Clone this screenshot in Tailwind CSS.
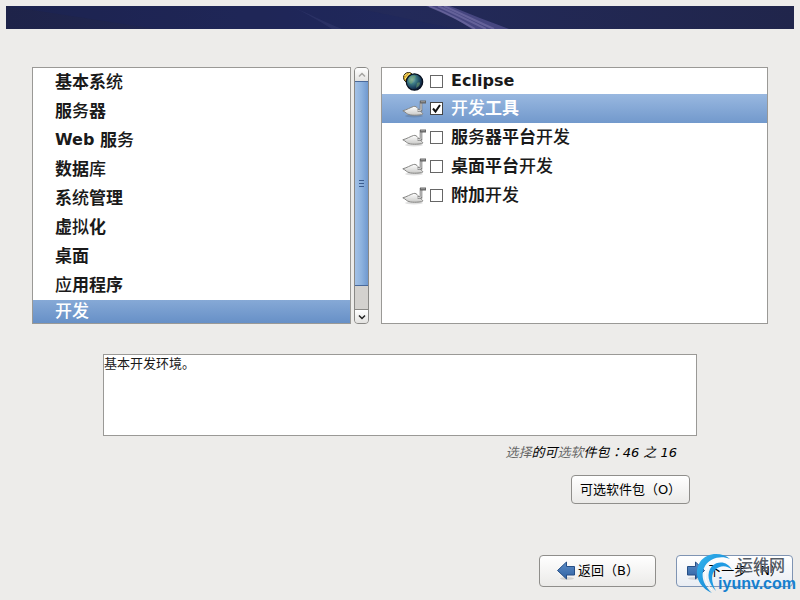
<!DOCTYPE html>
<html lang="zh-CN">
<head>
  <meta charset="UTF-8" />
  <meta name="viewport" content="width=device-width, initial-scale=1.0"/>
  <title>选择软件包</title>
  <script src="https://cdn.jsdelivr.net/npm/@tailwindcss/browser@4"></script>
</head>
<body class="relative min-h-screen flex flex-col bg-[#edecea] text-[#1a1a1a] text-[13px] leading-4 font-['DejaVu_Sans','Noto_Sans_CJK_SC',sans-serif]">

  <!-- Shared icon shapes -->
  <svg class="absolute w-0 h-0">
    <defs>
      <linearGradient id="blade" x1="0" y1="0" x2="0" y2="1">
        <stop offset="0" stop-color="#ffffff"/><stop offset="1" stop-color="#c9c9c7"/>
      </linearGradient>
      <linearGradient id="arrow" x1="0" y1="0" x2="0" y2="1">
        <stop offset="0" stop-color="#5d8cc6"/><stop offset="1" stop-color="#2f62a3"/>
      </linearGradient>
      <radialGradient id="globe" cx="0.35" cy="0.35" r="0.7">
        <stop offset="0" stop-color="#9fc3cc"/><stop offset="0.35" stop-color="#3f7f88"/>
        <stop offset="0.7" stop-color="#1d4460"/><stop offset="1" stop-color="#0a1530"/>
      </radialGradient>
      <linearGradient id="swirl" x1="0" y1="0" x2="1" y2="1">
        <stop offset="0" stop-color="#35b5ee"/><stop offset="1" stop-color="#0b78cc"/>
      </linearGradient>
    </defs>
    <symbol id="tool" viewBox="0 0 24 20">
      <ellipse cx="12" cy="17" rx="9" ry="1.5" fill="#000" opacity="0.12"/>
      <path d="M.8 11.8C5 10.7 8.500 8.400 11.500 7.500C13.500 7 14.800 8 15.800 9.500L20.500 14.200C21 15 20.500 15.600 19.500 15.700C13 16.600 7 16.500 4.500 14.300C3.500 13.200 2.200 12.500 .8 11.800Z" fill="url(#blade)" stroke="#858583" stroke-width="1"/>
      <path d="M15.500 11.500L19 11.200V3.300H20.500" fill="none" stroke="#777" stroke-width="2.600"/>
      <path d="M15.500 11.500L19 11.200V3.500" fill="none" stroke="#ddd" stroke-width="1"/>
      <path d="M18 3H24" stroke="#666" stroke-width="3"/>
      <path d="M19 2.700H23" stroke="#999" stroke-width="1"/>
    </symbol>
  </svg>

  <!-- Banner -->
  <header class="mx-[6px] mt-[6px] h-[23px] bg-linear-to-r from-[#1e2349] via-[#232a5a] to-[#20254b]">
    <svg class="block w-full h-full" viewBox="0 0 788 23" preserveAspectRatio="none">
      <path d="M0 0H340L450 23H150Z" fill="#1c2560" opacity="0.3"/>
      <path d="M284 0C300 6 318 16 336 23H326C312 14 298 6 284 0Z" fill="#4a5088" opacity="0.25"/>
      <path d="M420 0H444C464 8 484 16 503 23H466C452 14 438 6 420 0Z" fill="#565391" opacity="0.7"/>
      <path d="M423 0C440 7 456 15 469 23M432 0C450 8 466 16 480 23M438 0C456 8 472 16 488 23" fill="none" stroke="#8a83b8" stroke-width="2" opacity="0.45"/>
    </svg>
  </header>

  <main class="flex-1 flex flex-col pt-[38px]">
    <div class="flex gap-3 px-8 h-[257px] text-[17px] font-bold">
      <!-- Categories -->
      <div class="flex-338 min-w-0 flex gap-[3px]">
        <ul role="listbox" aria-label="类别" class="flex-1 bg-white border border-[#9a9996] overflow-hidden *:h-[29px] *:pl-[22px] *:pb-[2px] *:flex *:items-center">
          <li role="option">基本系<span class="font-medium">统</span></li>
          <li role="option">服<span class="font-medium">务</span>器</li>
          <li role="option"><span class="text-base whitespace-pre">Web </span>服<span class="font-medium">务</span></li>
          <li role="option">数据<span class="font-medium">库</span></li>
          <li role="option">系<span class="font-medium">统</span>管理</li>
          <li role="option">虚<span class="font-medium">拟</span>化</li>
          <li role="option">桌面</li>
          <li role="option"><span class="font-medium">应</span>用程序</li>
          <li role="option" aria-selected="true" class="!h-[23px] font-medium text-white bg-linear-to-b from-[#86a9d6] to-[#6790c7]">开发</li>
        </ul>
        <!-- Scrollbar -->
        <div class="w-[15px] flex flex-col bg-[#d3d1ce] border border-[#8a8986] rounded-sm overflow-hidden">
          <button aria-label="向上" class="h-[13px] flex items-center justify-center bg-linear-to-b from-white to-[#e4e3e1]">
            <svg class="w-2 h-2" viewBox="0 0 8 8"><path d="M1 5.500L4 2.500L7 5.500" fill="none" stroke="#a5a4a1" stroke-width="1.500"/></svg>
          </button>
          <div class="h-[205px] -mx-px border border-[#49699a] bg-linear-to-r from-[#a3c1e6] via-[#8db2de] to-[#7099cf] flex flex-col items-center justify-center gap-[2px]">
            <span class="w-[5px] h-px bg-[#3b5d8f]"></span>
            <span class="w-[5px] h-px bg-[#3b5d8f]"></span>
            <span class="w-[5px] h-px bg-[#3b5d8f]"></span>
          </div>
          <button aria-label="向下" class="mt-auto h-[14px] border-t border-[#8a8986] flex items-center justify-center bg-linear-to-b from-white to-[#e4e3e1]">
            <svg class="w-2 h-2" viewBox="0 0 8 8"><path d="M1 2.500L4 5.500L7 2.500" fill="none" stroke="#222" stroke-width="1.500"/></svg>
          </button>
        </div>
      </div>

      <!-- Package groups -->
      <ul class="flex-386 min-w-0 bg-white border border-[#9a9996] overflow-hidden">
        <li>
          <label class="h-[26px] pl-5 flex items-center">
            <svg class="w-6 h-5 mr-1" viewBox="0 0 24 20">
              <circle cx="6.500" cy="6.500" r="5" fill="#d9a91f" stroke="#2b2611"/>
              <path d="M3 8L8 2M2.500 5L5 2.500" stroke="#fff0a0" stroke-width="1"/>
              <circle cx="12.500" cy="11" r="8.200" fill="url(#globe)" stroke="#07101f" stroke-width="1.200"/>
              <path d="M7 7C10 4 13 4 14 6C11 8 13 10 9 13C7 12 6 10 7 7ZM15 12C18 10 19 12 17 15L14 17Z" fill="#76a56d" opacity="0.55"/>
            </svg>
            <input type="checkbox" class="appearance-none w-[13px] h-[13px] mr-2 bg-white border border-[#666]">
            <span class="pb-px text-base">Eclipse</span>
          </label>
        </li>
        <li class="text-white bg-linear-to-b from-[#99b8e0] to-[#7299cc]">
          <label class="h-[29px] pl-5 flex items-center">
            <svg class="w-6 h-5 mr-1"><use href="#tool"/></svg>
            <span class="grid mr-2">
              <input type="checkbox" checked class="appearance-none col-start-1 row-start-1 w-[13px] h-[13px] bg-white border border-[#444]">
              <svg class="col-start-1 row-start-1 w-[13px] h-[13px] pointer-events-none" viewBox="0 0 13 13"><path d="M3 6.500L5.500 9.500L10 3" fill="none" stroke="#111" stroke-width="2"/></svg>
            </span>
            <span class="pb-[2px]"><span class="font-medium">开发</span>工具</span>
          </label>
        </li>
        <li>
          <label class="h-[29px] pl-5 flex items-center">
            <svg class="w-6 h-5 mr-1"><use href="#tool"/></svg>
            <input type="checkbox" class="appearance-none w-[13px] h-[13px] mr-2 bg-white border border-[#666]">
            <span class="pb-[2px]">服<span class="font-medium">务</span>器平台<span class="font-medium">开发</span></span>
          </label>
        </li>
        <li>
          <label class="h-[29px] pl-5 flex items-center">
            <svg class="w-6 h-5 mr-1"><use href="#tool"/></svg>
            <input type="checkbox" class="appearance-none w-[13px] h-[13px] mr-2 bg-white border border-[#666]">
            <span class="pb-[2px]">桌面平台<span class="font-medium">开发</span></span>
          </label>
        </li>
        <li>
          <label class="h-[29px] pl-5 flex items-center">
            <svg class="w-6 h-5 mr-1"><use href="#tool"/></svg>
            <input type="checkbox" class="appearance-none w-[13px] h-[13px] mr-2 bg-white border border-[#666]">
            <span class="pb-[2px]">附加<span class="font-medium">开发</span></span>
          </label>
        </li>
      </ul>
    </div>

    <!-- Description -->
    <div class="mt-[30px] mx-[103px] flex flex-col items-end">
      <textarea readonly aria-label="说明" class="block w-full h-[82px] pt-px resize-none bg-white border border-[#9a9996] outline-none">基本开发环境。</textarea>
      <p class="mt-2 mr-5 italic text-black"><span class="text-[#666]">选择</span>的可<span class="text-[#666]">选软</span>件包<span class="font-['Noto_Sans_CJK_TC',sans-serif]" lang="zh-TW">：</span>46 之 16</p>
      <button class="mt-[14px] mr-[7px] w-[119px] h-[29px] text-black bg-linear-to-b from-white to-[#ebeae8] border border-[#8f8e8b] rounded-sm">可选软件包（O）</button>
    </div>
  </main>

  <!-- Navigation -->
  <footer class="flex justify-end gap-5 pr-[7px] pb-[13px] text-black">
    <button class="w-[117px] h-8 flex items-center justify-center gap-[2px] bg-linear-to-b from-white to-[#ebeae8] border border-[#8f8e8b] rounded-sm">
      <svg class="w-5 h-5" viewBox="0 0 20 20">
        <ellipse cx="11" cy="17.500" rx="7" ry="1.500" fill="#000" opacity="0.12"/>
        <path d="M1.500 9.500L10.500 1V5.500H18.500V14H10.500V18Z" fill="url(#arrow)" stroke="#264f86" stroke-width="1"/>
      </svg>
      返回（B）
    </button>
    <button class="w-[117px] h-8 flex items-center justify-center gap-[2px] bg-linear-to-b from-white to-[#e9edf3] border border-[#7f94b3] rounded-sm">
      <svg class="w-5 h-5" viewBox="0 0 20 20">
        <ellipse cx="9" cy="17.500" rx="7" ry="1.500" fill="#000" opacity="0.12"/>
        <path d="M18.500 9.500L9.500 1V5.500H1.500V14H9.500V18Z" fill="url(#arrow)" stroke="#264f86" stroke-width="1"/>
      </svg>
      下一步（N）
    </button>
  </footer>

  <!-- Site watermark -->
  <div class="absolute right-1 bottom-[5px] w-[102px] h-[42px] pointer-events-none">
    <svg class="absolute left-0 top-0 w-[42px] h-[42px]" viewBox="0 0 42 42">
      <path d="M36 6C28-1 13-1 6 9C-1 20 4 34 18 40C9 32 6 22 11 13C16 5 27 2 36 6Z" fill="url(#swirl)"/>
      <path d="M38 17C34 9 25 7 18 13C12 20 14 30 22 38C17 29 17 21 21 17C26 12 33 12 38 17Z" fill="#1f9be3"/>
      <path d="M35 9C27 5 17 7 13 15C9 23 12 31 18 37" fill="none" stroke="#fff" stroke-width="1"/>
    </svg>
    <div class="absolute right-0 top-[4px] flex flex-col items-end font-['Liberation_Sans','Noto_Sans_CJK_SC',sans-serif] text-base leading-[18px]">
      <span class="mr-[11px] text-[#555c66] font-medium">运维网</span>
      <span class="font-bold text-[#1580cf]">iyunv.com</span>
    </div>
  </div>
</body>
</html>
